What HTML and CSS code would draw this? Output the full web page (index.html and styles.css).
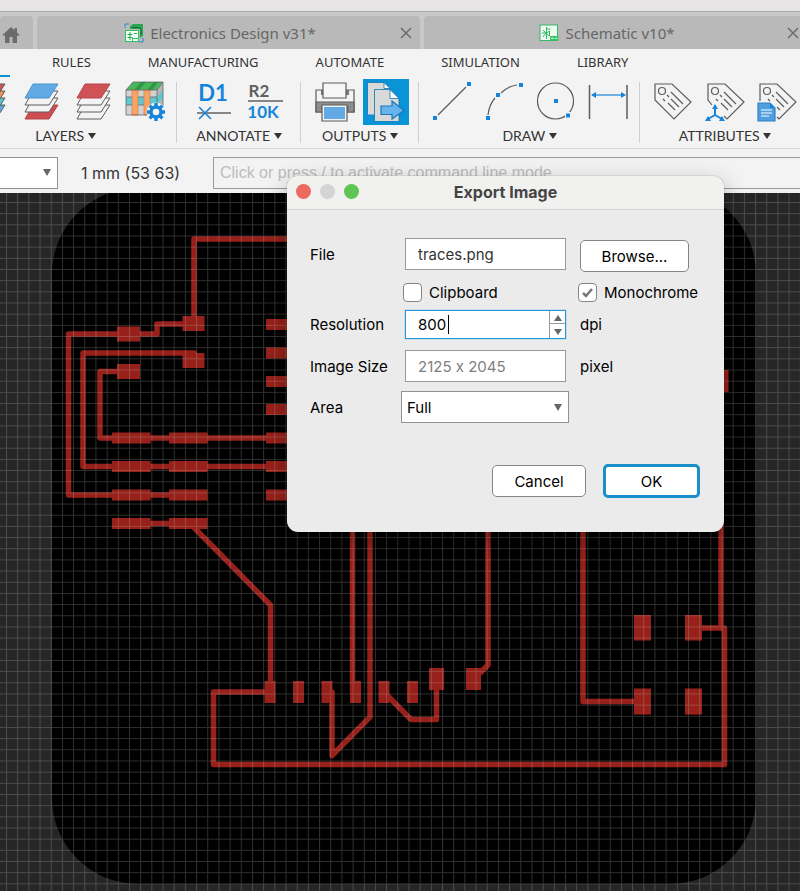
FILE: index.html
```html
<!DOCTYPE html>
<html lang="en">
<head>
    <meta charset="UTF-8">
    <meta name="viewport" content="width=device-width, initial-scale=1.0">
    <title>Electronics Design - Export Image</title>
    <link rel="stylesheet" href="styles.css">
</head>
<body>
    <div class="titlebar"></div>

    <nav class="tabs">
        <button class="tab home" aria-label="Home">
            <svg width="20" height="18" viewBox="0 0 20 18" fill="#6b6b6b"><path d="M10 1 1 9.500h3V17h4.500v-6h3v6H16V9.500h3L16 6.600V2h-2.500v2.300z"/></svg>
        </button>
        <div class="tab">
            <a class="tab-title" href="#">
                <svg width="20" height="20" viewBox="0 0 20 20" fill="none">
                    <path d="M1 5V1h4M19 15v4h-4" stroke="#2f86d6"/>
                    <path d="M6 3 9 1h10v12l-3 2V6H6z" fill="#2aa653"/>
                    <path d="M8 4.500h6a3 3 0 0 1 3 3V12" stroke="#0f6d33"/>
                    <rect x="1.500" y="7.500" width="13" height="11" fill="#f0fff4" stroke="#2fc162"/>
                    <path d="M6 9v8M3.500 11.500h5M3.500 14.500h5M10 10.500h3" stroke="#2aa653"/>
                    <rect x="8.500" y="15.500" width="6" height="3" fill="#f0fff4" stroke="#2fc162"/>
                </svg>
                Electronics Design v31*
            </a>
            <button class="tab-close" aria-label="Close tab"><svg width="12" height="12" viewBox="0 0 12 12" stroke="#6b6b6b" stroke-width="1.500"><path d="M1 1l10 10M11 1 1 11"/></svg></button>
        </div>
        <div class="tab">
            <a class="tab-title" href="#">
                <svg width="20" height="18" viewBox="0 0 20 18" fill="none">
                    <rect x="1" y="1" width="17.500" height="15.500" fill="#eefaf1" stroke="#37b865"/>
                    <path d="M7.500 3v12M3 9h4M7.500 5h4M4 6l3 3-3 4M7.500 9l3-2v5l-3-2" stroke="#37b865"/>
                    <rect x="11" y="12" width="8.500" height="4.500" fill="#37c468"/>
                    <path d="M12 14.300h3M16 14.300h2.500" stroke="#dff7e6"/>
                </svg>
                Schematic v10*
            </a>
            <button class="tab-close" aria-label="Close tab"><svg width="12" height="12" viewBox="0 0 12 12" stroke="#6b6b6b" stroke-width="1.500"><path d="M1 1l10 10M11 1 1 11"/></svg></button>
        </div>
    </nav>

    <header class="ribbon">
        <div class="menu">
            <a href="#">RULES</a>
            <a href="#">MANUFACTURING</a>
            <a href="#">AUTOMATE</a>
            <a href="#">SIMULATION</a>
            <a href="#">LIBRARY</a>
        </div>
        <div class="groups">
            <div class="group">
                <div class="tools">
                    <button class="tool" aria-label="All layers">
                        <svg viewBox="0 0 46 46" stroke="#5d5d5d">
                            <path d="M15 26h25l-9 14H7z" fill="#5aa7e4"/><path d="M15 19h25l-9 14H7z" fill="#59c4cf"/><path d="M15 12h25l-9 14H7z" fill="#f0934f"/><path d="M15 5h25l-9 14H7z" fill="#cf5257"/>
                        </svg>
                    </button>
                    <button class="tool" aria-label="Top and bottom layers">
                        <svg viewBox="0 0 46 46" stroke="#5d5d5d">
                            <path d="M16 26h25l-9 14H8z" fill="#cf4c53" stroke="#b8434a"/><path d="M16 19h25l-9 14H8z" fill="#f3f3f3"/><path d="M16 12h25l-9 14H8z" fill="#f3f3f3"/><path d="M16 5h25l-9 14H8z" fill="#63aae4" stroke="#4993cf"/>
                        </svg>
                    </button>
                    <button class="tool" aria-label="Top layer">
                        <svg viewBox="0 0 46 46" stroke="#5d5d5d">
                            <path d="M16 26h25l-9 14H8z" fill="#f3f3f3"/><path d="M16 19h25l-9 14H8z" fill="#f3f3f3"/><path d="M16 12h25l-9 14H8z" fill="#f3f3f3"/><path d="M16 5h25l-9 14H8z" fill="#cf5257" stroke="#b8434a"/>
                        </svg>
                    </button>
                    <button class="tool" aria-label="Layer stack manager">
                        <svg viewBox="0 0 46 46">
                            <path d="M5 11h31v25H5z" fill="#d2d2d2"/>
                            <path d="M36 11l6-8v25l-6 8z" fill="#b5b5b5"/>
                            <path d="M5 18h31l6-7v8l-6 7H5z" fill="#5cc8d3"/>
                            <path d="M5 11l7-8h30l-6 8z" fill="#47b75a"/>
                            <path d="M13 11l7-8h5l-7 8zM26 11l7-8h4l-6 8z" fill="#2f9646"/>
                            <path d="M11 11h6v25h-6zM23 11h6v25h-6z" fill="#f7a468" stroke="#d9803f" stroke-width=".7"/>
                            <path d="M5 11h31v25H5zM5 11l7-8h30l-6 8M42 3v25l-6 8M5 18h6M5 26h6M17 18h6M17 26h6M29 18h7M29 26h7" fill="none" stroke="#666" stroke-width=".8"/>
                            <circle cx="35" cy="33" r="9.500" fill="#f3f3f3"/>
                            <circle cx="35" cy="33" r="5" fill="none" stroke="#1784dc" stroke-width="3.400"/>
                            <path d="M35 24v4M35 38v4M26 33h4M40 33h4M28.600 26.600l2.800 2.800M38.600 36.600l2.800 2.800M41.400 26.600l-2.800 2.800M31.400 36.600l-2.800 2.800" stroke="#1784dc" stroke-width="3.400"/>
                        </svg>
                    </button>
                </div>
                <button class="caption">LAYERS <i class="arrow"></i></button>
            </div>
            <div class="group">
                <div class="tools">
                    <button class="tool" aria-label="Name">
                        <svg viewBox="0 0 46 46">
                            <text class="icon-name" x="23" y="22">D1</text>
                            <path d="M7 34h34" stroke="#606060" stroke-width="1.600"/>
                            <path d="M9 28l12 12M21 28 9 40" stroke="#1784dc" stroke-width="1.600"/>
                        </svg>
                    </button>
                    <button class="tool" aria-label="Value">
                        <svg viewBox="0 0 46 46">
                            <text class="icon-ref" x="17" y="18">R2</text>
                            <path d="M6 22h35" stroke="#606060" stroke-width="1.400"/>
                            <text class="icon-value" x="21" y="39">10K</text>
                        </svg>
                    </button>
                </div>
                <button class="caption">ANNOTATE <i class="arrow"></i></button>
            </div>
            <div class="group">
                <div class="tools">
                    <button class="tool" aria-label="Print">
                        <svg viewBox="0 0 46 46" stroke="#5d5d5d" stroke-width="1.200">
                            <path d="M5 11h38v22H5z" fill="#f3f3f3"/>
                            <path d="M5 23h38v10H5z" fill="#8e8e8e"/>
                            <path d="M10 11h28v5H10zM10 27h28v6H10z" fill="#777" stroke="none"/>
                            <path d="M12 4h23v15H12z" fill="#f6f6f6"/>
                            <path d="M11 26h25v16H11z" fill="#f3f3f3"/>
                            <path d="M13 28h21v12H13z" fill="#63aae4" stroke="none"/>
                        </svg>
                    </button>
                    <button class="tool active" aria-label="Export image">
                        <svg viewBox="0 0 46 46" stroke="#0b77ae" stroke-width=".8">
                            <path d="M4.500 3.500H21l6 6V36H4.500z" fill="#d9d9d9"/>
                            <path d="M21 3.500v6h6z" fill="#fff"/>
                            <path d="M11.500 10.500H27l9 9V42.500H11.500z" fill="#d9d9d9"/>
                            <path d="M27 10.500v9h9z" fill="#fff"/>
                            <path d="M18 27h11v-5l12 9.500L29 40v-4.500H18z" fill="#67b3ee" stroke="#1b78b8" stroke-width="1.200"/>
                        </svg>
                    </button>
                </div>
                <button class="caption">OUTPUTS <i class="arrow"></i></button>
            </div>
            <div class="group">
                <div class="tools">
                    <button class="tool" aria-label="Line">
                        <svg viewBox="0 0 46 46"><path d="M9 36 37 8" stroke="#5d5d5d" stroke-width="1.200"/><path d="M4 37h4v4H4zM38 3h4v4h-4z" fill="#1784dc"/></svg>
                    </button>
                    <button class="tool" aria-label="Arc">
                        <svg viewBox="0 0 46 46"><path d="M7 36Q8 26 14 19M20 14Q27 7 36 6" fill="none" stroke="#5d5d5d" stroke-width="1.200"/><path d="M5 37h4v4H5zM15 14h4v4h-4zM38 4h4v4h-4z" fill="#1784dc"/></svg>
                    </button>
                    <button class="tool" aria-label="Circle">
                        <svg viewBox="0 0 46 46"><circle cx="22.500" cy="22" r="18" fill="none" stroke="#5d5d5d" stroke-width="1.200"/><path d="M32 33h7v7h-7z" fill="#f3f3f3"/><path d="M21 20h4v4h-4zM33 34.500h4v4h-4z" fill="#1784dc"/></svg>
                    </button>
                    <button class="tool" aria-label="Dimension">
                        <svg viewBox="0 0 46 46"><path d="M4.500 6v34M42 6v34" stroke="#5d5d5d" stroke-width="1.500"/><path d="M8 16h31" stroke="#1784dc" stroke-width="1.200"/><path d="M6 16l5-3v6zM41 16l-5-3v6z" fill="#1784dc"/></svg>
                    </button>
                </div>
                <button class="caption">DRAW <i class="arrow"></i></button>
            </div>
            <div class="group">
                <div class="tools">
                    <button class="tool" aria-label="Attribute">
                        <svg viewBox="0 0 46 46" fill="none" stroke="#5d5d5d" stroke-width="1.200"><path d="M5 5h17l19 18-17 17L5 21z"/><circle cx="12" cy="12" r="3.500"/><path d="M21 13l12 12M17 16l2 2M21 20l8 8M13 20l2 2M18 24l7 7"/></svg>
                    </button>
                    <button class="tool" aria-label="Global attributes">
                        <svg viewBox="0 0 46 46" fill="none" stroke="#5d5d5d" stroke-width="1.200"><path d="M10 26 6 21V5h17l19 18-17 17-3-3"/><circle cx="13" cy="12" r="3.500"/><path d="M22 13l12 12M18 16l2 2M22 20l8 8M14 20l2 2M19 24l7 7"/><path d="M13 36v-9M13 36l-7 4M13 36l7 4" stroke="#1784dc" stroke-width="2"/><path d="M13 25l-3 5h6zM3 42l3-5 3 5zM23 42l-3-5-3 5z" fill="#1784dc" stroke="none"/></svg>
                    </button>
                    <button class="tool" aria-label="Attribute list">
                        <svg viewBox="0 0 46 46" fill="none" stroke="#5d5d5d" stroke-width="1.200"><path d="M6 22V5h17l19 18-17 17-2-2"/><circle cx="13" cy="12" r="3.500"/><path d="M22 13l12 12M18 16l2 2M22 20l8 8M14 20l2 2M23 28l3 3"/><path d="M4 24h12l5 5v13H4z" fill="#4f9fe0" stroke="#2f80c6"/><path d="M16 24v5h5z" fill="#1784dc" stroke="none"/><path d="M7 31h11M7 34h11M7 37h8" stroke="#fff"/></svg>
                    </button>
                </div>
                <button class="caption">ATTRIBUTES <i class="arrow"></i></button>
            </div>
        </div>
    </header>

    <div class="command-bar">
        <select class="layer-select" aria-label="Layer"><option></option></select>
        <span class="coords">1 mm (53 63)</span>
        <input class="command" type="text" placeholder="Click or press / to activate command line mode" aria-label="Command line">
    </div>

    <main class="board">
        <svg class="layout" viewBox="0 193 800 698" preserveAspectRatio="xMinYMin slice" aria-label="Board layout">
            <defs>
                <pattern id="grid" x="6" y="202" width="11.180" height="11.170" patternUnits="userSpaceOnUse">
                    <path d="M.5 0V12M0 .5H12" stroke="#bebebe" stroke-opacity=".25" fill="none"/>
                </pattern>
            </defs>
            <rect y="193" width="800" height="698" fill="#262626"/>
            <rect x="52" y="188" width="704" height="696" rx="86" fill="#000"/>
            <!-- traces -->
            <g fill="none" stroke="#97211a" stroke-width="5.500" stroke-linejoin="round" stroke-linecap="round">
                <path d="M300 239H194V324H157V334H68.500V495H188"/>
                <path d="M194 360V353H83V466.500H290"/>
                <path d="M128 371.500H100V438H290"/>
                <path d="M131 523.500H190L270.500 605V692H213.500V764.500H724.500V628H693"/>
                <path d="M352.500 520V692M370 520V717L332 755.500V692"/>
                <path d="M384 692 411 719.500H436.500V680M488 520V665L474 679M583 520V701.500H642M721 520V628"/>
            </g>
            <!-- pads -->
            <g fill="#97211a">
                <path d="M117 326.500h23v15h-23zM182.500 316h22v15h-22zM182.500 353h22v15h-22zM117 364h23v15h-23z"/>
                <path d="M112 432.500h38.500v11H112zM169 432.500h38.500v11H169zM112 461h38.500v11H112zM169 461h38.500v11H169zM112 489.500h38.500v11H112zM169 489.500h38.500v11H169zM112 518h38.500v11H112zM169 518h38.500v11H169z"/>
                <path d="M266 319h38v11h-38zM266 347.500h38v11h-38zM266 376h38v11h-38zM266 404h38v11h-38zM266 432.500h38v11h-38zM266 461h38v11h-38zM266 489.500h38v11h-38z"/>
                <path d="M264.500 681h11v22h-11zM293 681h11v22h-11zM321.500 681h11v22h-11zM350 681h11v22h-11zM378.500 681h11v22h-11zM407 681h11v22h-11zM429 668h15v22h-15zM466 668h15v22h-15z"/>
                <path d="M634 615h17v25.500h-17zM685 615h17v25.500h-17zM634 688.500h17v26h-17zM685 688.500h17v26h-17zM710 370h18.500v22H710z"/>
            </g>
            <rect y="193" width="800" height="698" fill="url(#grid)"/>
        </svg>
    </main>

    <form class="dialog" role="dialog" aria-labelledby="dialog-title" onsubmit="return false">
        <div class="dialog-head">
            <div class="lights">
                <button type="button" class="light red" aria-label="Close"></button>
                <button type="button" class="light gray" aria-label="Minimize"></button>
                <button type="button" class="light green" aria-label="Zoom"></button>
            </div>
            <h1 id="dialog-title">Export Image</h1>
        </div>
        <div class="fields">
            <label for="file">File</label>
            <input class="field" type="text" id="file" value="traces.png">
            <button type="button" class="btn browse">Browse...</button>

            <label class="check clipboard"><input type="checkbox">Clipboard</label>
            <label class="check monochrome"><input type="checkbox" checked>Monochrome</label>

            <label for="resolution">Resolution</label>
            <div class="spin">
                <input type="text" id="resolution" value="800">
                <span class="caret"></span>
                <div class="spin-buttons">
                    <button type="button" aria-label="Increase"><i class="arrow up"></i></button>
                    <button type="button" aria-label="Decrease"><i class="arrow"></i></button>
                </div>
            </div>
            <span>dpi</span>

            <label for="size">Image Size</label>
            <input class="field readonly" type="text" id="size" value="2125 x 2045" readonly>
            <span>pixel</span>

            <label for="area">Area</label>
            <select class="area" id="area"><option>Full</option><option>Window</option></select>
        </div>
        <div class="actions">
            <button type="button" class="btn cancel">Cancel</button>
            <button type="submit" class="btn ok">OK</button>
        </div>
    </form>
</body>
</html>
```
FILE: styles.css
```css
* {
    box-sizing: border-box;
}
body {
    margin: 0;
    min-height: 100vh;
    display: flex;
    flex-direction: column;
    position: relative;
    overflow: hidden;
    background: #262626;
    font-family: Inter, "Liberation Sans", sans-serif;
    font-size: 15px;
    color: #111;
}
button, input, select {
    font: inherit;
    color: inherit;
}
button {
    padding: 0;
    border: none;
    background: none;
}
a {
    color: inherit;
    text-decoration: none;
}
svg {
    display: block;
}
.titlebar {
    height: 12px;
    background: #e7e5e6;
    border-bottom: 1px solid #aaa;
}

/* document tabs */
.tabs {
    display: flex;
    gap: 4px;
    height: 37px;
    padding-top: 4px;
    background: #cac9c9;
    overflow: hidden;
}
.tab {
    flex: 0 0 383px;
    display: flex;
    align-items: center;
    padding-right: 8px;
    background: #b9b9b9;
    border-radius: 4px 4px 0 0;
}
.tab.home {
    flex: 0 0 33px;
    padding: 4px 0 0 1px;
}
.tab-title {
    flex: 1;
    display: flex;
    align-items: center;
    justify-content: center;
    gap: 6px;
    padding-left: 3px;
    font-family: "Noto Sans", "Open Sans", sans-serif;
    font-size: 15px;
    color: #666;
}

/* ribbon */
.ribbon {
    height: 100px;
    background: #f3f3f3;
    border-bottom: 1px solid #d9d9d9;
    font-family: Lato, "Open Sans", sans-serif;
    font-size: 14px;
    color: #333;
    overflow: hidden;
}
.menu {
    display: flex;
    gap: 57px;
    height: 28px;
    padding-left: 52px;
    font-family: "Noto Sans", "Open Sans", sans-serif;
    font-size: 13px;
    line-height: 27px;
    background: linear-gradient(#0a94d8, #0a94d8) 0 26px / 10px 3px no-repeat;
}
.groups {
    display: grid;
    grid-template-columns: 223px 124px 118px 221px 170px;
    margin-left: -46px;
    padding-top: 2px;
}
.group {
    display: flex;
    flex-direction: column;
    align-items: center;
}
.group:not(:last-child) {
    background: linear-gradient(#cfcfcf, #cfcfcf) right 3px / 1px 61px no-repeat;
}
.tools {
    display: flex;
    gap: 6px;
}
.tool {
    width: 46px;
    height: 46px;
}
.tool.active {
    background: #0a94d8;
}
.caption {
    height: 22px;
    line-height: 22px;
}
.arrow {
    display: inline-block;
    border: 4px solid transparent;
    border-top: 6px solid #333;
    border-bottom: 0;
    vertical-align: 2px;
}
.arrow.up {
    border-top: 0;
    border-bottom: 6px solid #666;
}
.icon-name {
    font: 700 22px Lato, sans-serif;
    fill: #1784dc;
    text-anchor: middle;
}
.icon-ref {
    font: 700 17px Lato, sans-serif;
    fill: #606060;
    text-anchor: middle;
}
.icon-value {
    font: 700 17px Lato, sans-serif;
    fill: #1784dc;
    text-anchor: middle;
}

/* command line */
.command-bar {
    display: flex;
    align-items: center;
    height: 44px;
    padding-top: 3px;
    background: #f3f3f3;
    overflow: hidden;
}
select {
    appearance: none;
    border: 1px solid #919191;
    border-radius: 0;
    background: #fff url("data:image/svg+xml,%3Csvg xmlns='http://www.w3.org/2000/svg' width='8' height='7'%3E%3Cpath d='M0 0h8L4 7z' fill='%23666'/%3E%3C/svg%3E") right 6px center no-repeat;
}
.layer-select {
    flex: 0 0 60px;
    height: 32px;
    margin-left: -2px;
}
.coords {
    flex: 0 0 155px;
    padding-left: 23px;
    font-size: 16px;
    color: #333;
}
.command {
    flex: 1 0 auto;
    height: 32px;
    margin-right: -2px;
    padding: 0 6px;
    border: 1px solid #999;
    background: #f3f3f3;
    font-family: "Liberation Sans", Arial, sans-serif;
    font-size: 16px;
}
.command::placeholder {
    color: #bdbdbd;
}

/* board */
.board {
    flex: 1;
    min-height: 0;
}
.layout {
    width: 100%;
    height: 100%;
}

/* export dialog, floats over the editor */
.dialog {
    position: absolute;
    top: 176px;
    left: 287px;
    width: 437px;
    background: #ebebeb;
    border-radius: 11px;
    box-shadow: 0 0 1px rgba(0, 0, 0, 0.6), 0 8px 24px rgba(0, 0, 0, 0.3);
    color: #000;
}
.dialog-head {
    display: grid;
    grid-template-columns: 1fr auto 1fr;
    align-items: center;
    height: 34px;
    padding: 0 9px 2px;
    background: #f1f1ef;
    border-bottom: 1px solid #d2d2d2;
    border-radius: 11px 11px 0 0;
}
.dialog-head h1 {
    margin: 0;
    font-size: 16px;
    font-weight: 700;
    color: #444;
}
.lights {
    display: flex;
    gap: 9px;
}
.light {
    width: 15px;
    height: 15px;
    border-radius: 50%;
}
.red {
    background: #ed6a5f;
}
.gray {
    background: #d4d4d4;
}
.green {
    background: #5ec454;
}
.fields {
    display: grid;
    grid-template-columns: 95px 175px 1fr;
    grid-template-rows: 40px 36px 28px 56px 26px;
    align-items: center;
    padding: 24px 23px 0;
}
.field, .spin {
    width: 161px;
    border: 1px solid #999;
    background: #fff;
}
.field {
    height: 32px;
    padding: 0 12px;
    color: #333;
    font-variant-ligatures: no-contextual;
}
.readonly {
    color: #808080;
}
.btn {
    height: 32px;
    border: 1px solid #858585;
    border-radius: 5px;
    background: #fff;
}
.browse {
    width: 109px;
    margin-top: 4px;
}
.check {
    display: flex;
    align-items: center;
    gap: 7px;
    margin-left: -2px;
}
.clipboard {
    grid-column: 2;
}
.check input {
    appearance: none;
    width: 19px;
    height: 19px;
    margin: 0;
    border: 1px solid #858585;
    border-radius: 4px;
    background: #fff;
}
.check input:checked {
    background: #fff url("data:image/svg+xml,%3Csvg xmlns='http://www.w3.org/2000/svg' width='13' height='11' fill='none'%3E%3Cpath d='M2 6l3 3 6-7' stroke='%23777' stroke-width='2.500'/%3E%3C/svg%3E") center no-repeat;
}
.spin {
    position: relative;
    display: flex;
    height: 29px;
    border-color: #2596d8;
    box-shadow: 0 0 1px #2596d8;
}
.spin input {
    flex: 1;
    min-width: 0;
    padding: 0 12px;
    border: none;
    outline: none;
    background: none;
}
.caret {
    position: absolute;
    left: 42px;
    top: 4px;
    width: 1px;
    height: 19px;
    background: #000;
}
.spin-buttons {
    display: grid;
    grid-template-rows: 1fr 1fr;
    width: 16px;
    border-left: 1px solid #999;
}
.spin-buttons button {
    line-height: 8px;
}
.spin-buttons button:first-child {
    border-bottom: 1px solid #999;
}
.spin-buttons .arrow {
    border-top-color: #666;
    vertical-align: middle;
}
.area {
    width: 168px;
    height: 32px;
    margin-left: -4px;
    padding: 0 5px;
}
.actions {
    display: flex;
    justify-content: flex-end;
    align-items: center;
    gap: 17px;
    padding: 44px 24px 34px;
}
.cancel {
    width: 94px;
}
.ok {
    width: 97px;
    height: 34px;
    border: 3px solid #1a8fca;
}
```
